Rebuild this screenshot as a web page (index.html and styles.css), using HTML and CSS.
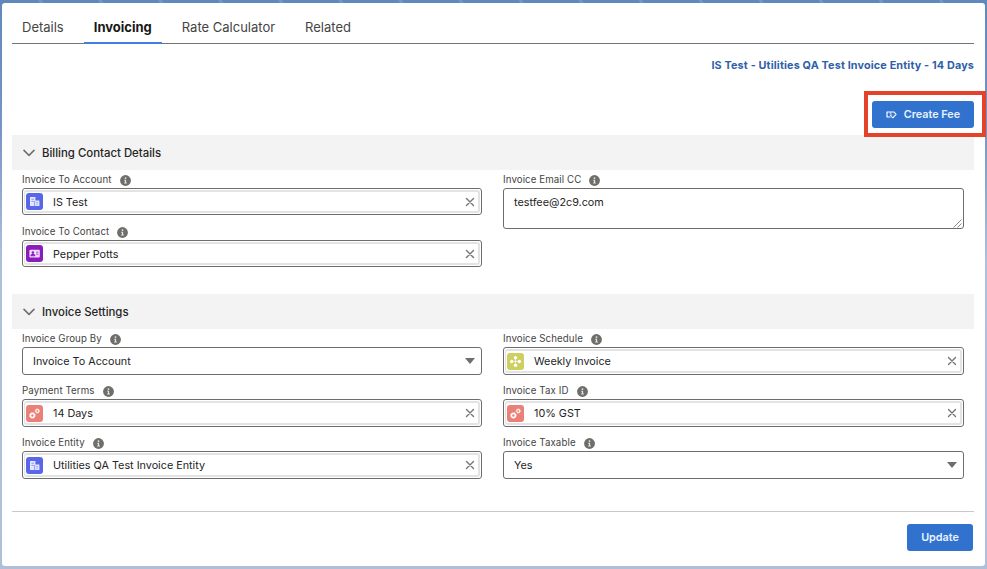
FILE: index.html
```html
<!DOCTYPE html>
<html lang="en">
<head>
<meta charset="utf-8">
<title>Invoicing</title>
<link rel="stylesheet" href="styles.css">
</head>
<body>
<svg class="sprite" aria-hidden="true">
  <symbol id="info" viewBox="0 0 11 11"><circle cx="5.5" cy="5.5" r="5.4" fill="#706e6b"/><circle cx="5.5" cy="3.1" r=".9" fill="#e8e8e8"/><path d="M4.3 4.8h1.8v2.7h.7v.9H4.2v-.9h.7V5.7h-.6z" fill="#e8e8e8"/></symbol>
  <symbol id="close" viewBox="0 0 10 10"><path d="M1.5 1.5l7 7M8.5 1.5l-7 7" stroke="#747474" stroke-width="1.4" stroke-linecap="round"/></symbol>
  <symbol id="chevron" viewBox="0 0 12 8"><path d="M1 1.4l5 5 5-5" fill="none" stroke="#706e6b" stroke-width="1.5" stroke-linecap="round" stroke-linejoin="round"/></symbol>
  <symbol id="account" viewBox="0 0 17 17"><path d="M4 4h5.4v3.4h4V13H4z" fill="#e4e6ff"/><path d="M5.4 6.2h2.6M5.4 8.4h2.4M8.6 8v5M10.4 9.4h1.4M10.4 11.2h1.4" stroke="#5867e8" stroke-width=".6"/></symbol>
  <symbol id="contact" viewBox="0 0 17 17"><rect x="3.4" y="4.8" width="10.4" height="7.6" rx="1" fill="#f2ddff"/><circle cx="6.9" cy="7.5" r="1.2" fill="#8a1bbd"/><path d="M4.8 10.8c0-2.3 4.2-2.3 4.2 0zM10.2 7.2h2.2M10.2 9.2h2.2" fill="#8a1bbd" stroke="#8a1bbd" stroke-width=".8"/></symbol>
  <symbol id="gears" viewBox="0 0 17 17"><g fill="none" stroke="#fff"><circle cx="6.4" cy="10.4" r="2" stroke-width="1.5"/><circle cx="6.4" cy="10.4" r="2.8" stroke-width=".8" stroke-dasharray="1.1 1.1"/><circle cx="11.3" cy="6" r="1.5" stroke-width="1.2"/><circle cx="11.3" cy="6" r="2.2" stroke-width=".7" stroke-dasharray=".9 .83"/></g></symbol>
  <symbol id="schedule" viewBox="0 0 17 17"><g fill="#fff"><circle cx="8.5" cy="4.7" r="1.7"/><circle cx="8.5" cy="12.3" r="1.7"/><circle cx="4.7" cy="8.5" r="1.7"/><circle cx="12.3" cy="8.5" r="1.7"/><circle cx="8.5" cy="8.5" r="1"/></g><path d="M8.5 6v5M6 8.5h5" stroke="#fff" stroke-width=".5"/></symbol>
</svg>
<main class="panel">
  <nav class="tabs">
    <a class="tab">Details</a><a class="tab tab-active">Invoicing</a><a class="tab">Rate Calculator</a><a class="tab">Related</a>
  </nav>
  <div class="summary">IS Test - Utilities QA Test Invoice Entity - 14 Days</div>
  <div class="actions">
    <div class="highlight">
      <button class="button button-fee"><svg class="fee-icon" viewBox="0 0 12 9"><path d="M5 7.3H1V1.7h7.6l2.4 2.6-3.5 3.8-1.7-1.7M1 3.2h1M1 5.8h1M8.5 4.1h.2" fill="none" stroke="#fff" stroke-width="1.1" stroke-linejoin="round"/><path d="M6 2.8c-1.8-.6-2.2 1-.8 1.5 1.6.5 1 2-.9 1.3" fill="none" stroke="#fff" stroke-width=".9"/></svg><span>Create Fee</span></button>
    </div>
  </div>

  <section class="section billing">
    <h2 class="section-title"><svg class="chevron"><use href="#chevron"/></svg><span>Billing Contact Details</span></h2>
    <div class="columns">
      <div class="column">
        <div class="field"><div class="label"><span>Invoice To Account</span><svg class="info"><use href="#info"/></svg></div>
          <div class="control lookup"><div class="pill"><svg class="badge account"><use href="#account"/></svg><span class="value">IS Test</span><svg class="close"><use href="#close"/></svg></div></div></div>
        <div class="field"><div class="label"><span>Invoice To Contact</span><svg class="info"><use href="#info"/></svg></div>
          <div class="control lookup"><div class="pill"><svg class="badge contact"><use href="#contact"/></svg><span class="value">Pepper Potts</span><svg class="close"><use href="#close"/></svg></div></div></div>
      </div>
      <div class="column">
        <div class="field"><div class="label"><span>Invoice Email CC</span><svg class="info"><use href="#info"/></svg></div>
          <div class="control textarea"><span class="value">testfee@2c9.com</span><svg class="grip" viewBox="0 0 9 9"><path d="M.5 8.5l8-8M4.5 8.5l4-4" stroke="#8a8a8a" stroke-width="1"/></svg></div></div>
      </div>
    </div>
  </section>

  <section class="section settings">
    <h2 class="section-title"><svg class="chevron"><use href="#chevron"/></svg><span>Invoice Settings</span></h2>
    <div class="columns">
      <div class="column">
        <div class="field"><div class="label"><span>Invoice Group By</span><svg class="info"><use href="#info"/></svg></div>
          <div class="control select"><span class="value">Invoice To Account</span><i class="arrow"></i></div></div>
        <div class="field"><div class="label"><span>Payment Terms</span><svg class="info"><use href="#info"/></svg></div>
          <div class="control lookup"><div class="pill"><svg class="badge terms"><use href="#gears"/></svg><span class="value">14 Days</span><svg class="close"><use href="#close"/></svg></div></div></div>
        <div class="field"><div class="label"><span>Invoice Entity</span><svg class="info"><use href="#info"/></svg></div>
          <div class="control lookup"><div class="pill"><svg class="badge account"><use href="#account"/></svg><span class="value">Utilities QA Test Invoice Entity</span><svg class="close"><use href="#close"/></svg></div></div></div>
      </div>
      <div class="column">
        <div class="field"><div class="label"><span>Invoice Schedule</span><svg class="info"><use href="#info"/></svg></div>
          <div class="control lookup"><div class="pill"><svg class="badge schedule"><use href="#schedule"/></svg><span class="value">Weekly Invoice</span><svg class="close"><use href="#close"/></svg></div></div></div>
        <div class="field"><div class="label"><span>Invoice Tax ID</span><svg class="info"><use href="#info"/></svg></div>
          <div class="control lookup"><div class="pill"><svg class="badge terms"><use href="#gears"/></svg><span class="value">10% GST</span><svg class="close"><use href="#close"/></svg></div></div></div>
        <div class="field"><div class="label"><span>Invoice Taxable</span><svg class="info"><use href="#info"/></svg></div>
          <div class="control select"><span class="value">Yes</span><i class="arrow"></i></div></div>
      </div>
    </div>
  </section>
  <footer class="footer"><button class="button button-update">Update</button></footer>
</main>
</body>
</html>
```
FILE: styles.css
```css
* { box-sizing: border-box; }
body {
  margin: 0;
  height: 569px;
  padding: 3px 2px;
  overflow: hidden;
  background:
    repeating-linear-gradient(60deg, transparent 0 34px, rgba(255, 255, 255, .13) 35px 37px, transparent 38px 52px),
    linear-gradient(#6088bd 0, #7894c4 130px, #aebfdc 260px, #b0bfd9 100%);
  background-size: 100% 3px, 100% 100%;
  background-repeat: no-repeat;
  font-family: Inter, "Liberation Sans", sans-serif;
  color: #252525;
}
svg { display: block; flex: none; }
.sprite { position: absolute; width: 0; height: 0; }
.panel {
  height: 563px;
  padding: 0 11px 0 10px;
  background: #fff;
  border-radius: 3px;
}
.tabs {
  display: flex;
  height: 41px;
  border-bottom: 1px solid #747474;
}
.tab {
  height: 41px;
  padding: 0 10px;
  margin-right: 10px;
  font-size: 13px;
  line-height: 48px;
  color: #444;
}
.tab-active {
  padding: 0 10px;
  font-weight: 700;
  color: #181818;
  border-bottom: 2px solid #3f7fe0;
}
.summary {
  height: 42px;
  padding-top: 14px;
  text-align: right;
  font-size: 10.8px;
  line-height: 16px;
  letter-spacing: .15px;
  font-weight: 700;
  color: #2f5fa9;
  white-space: nowrap;
}
.actions {
  display: flex;
  justify-content: flex-end;
  height: 49px;
  padding-top: 5px;
}
.highlight {
  width: 122px;
  height: 46px;
  margin-right: -12px;
  padding: 6px 4px 5px;
  border: 4px solid #e2432a;
  background: #fff;
}
.button {
  display: flex;
  align-items: center;
  justify-content: center;
  height: 27px;
  padding: 0;
  border: 0;
  border-radius: 3px;
  background: #3172ce;
  color: #e8f2ff;
  font: 600 10.8px/16px Inter, "Liberation Sans", sans-serif;
}
.button-fee { width: 102px; gap: 7px; }
.fee-icon { width: 11px; height: 9px; }
.button-update { width: 66px; padding-top: 1px; margin-right: 1px; }
.section-title {
  display: flex;
  align-items: center;
  gap: 7px;
  height: 35px;
  margin: 0;
  padding-left: 11px;
  background: #f3f3f3;
  font-size: 11.4px;
  font-weight: 450;
}
.chevron { width: 12px; height: 8px; }
.billing { height: 159px; }
.settings { height: 217px; }
.columns {
  display: grid;
  grid-template-columns: 460px 461px;
  column-gap: 21px;
  padding: 2px 0 0 10px;
}
.field { height: 52px; }
.label {
  display: flex;
  gap: 8px;
  height: 16px;
  font-size: 9.7px;
  line-height: 15px;
  letter-spacing: .1px;
  color: #444;
}
.info { width: 11px; height: 11px; margin-top: 3px; }
.control {
  display: flex;
  align-items: center;
  height: 27px;
  border: 1px solid #6d6d6d;
  border-radius: 3px;
  background: #fff;
  font-size: 10.8px;
}
.settings .control { height: 28px; }
.lookup { padding: 1px; }
.pill {
  display: flex;
  align-items: center;
  flex: 1;
  height: 100%;
  padding: 0 3px 0 1px;
  border: 2px solid #e3e3e3;
  border-left-width: 1px;
  border-radius: 3px;
}
.badge { width: 17px; height: 17px; margin-right: 10px; border-radius: 3px; }
.account { background: #5867e8; }
.contact { background: #8a1bbd; }
.terms { background: #ea8078; }
.schedule { background: #cdcf61; }
.value { flex: 1; padding-top: 1px; white-space: nowrap; }
.close { width: 10px; height: 10px; }
.select { padding: 0 6px 0 10px; }
.arrow {
  border: 5px solid transparent;
  border-top: 6px solid #706e6b;
  border-bottom: 0;
}
.textarea {
  position: relative;
  align-items: flex-start;
  height: 41px;
  padding: 5px 10px;
  line-height: 15px;
}
.grip { position: absolute; right: 1px; bottom: 0; width: 9px; height: 9px; }
.footer {
  display: flex;
  justify-content: flex-end;
  height: 54px;
  padding-top: 12px;
  border-top: 1px solid #c9c9c9;
}
```
